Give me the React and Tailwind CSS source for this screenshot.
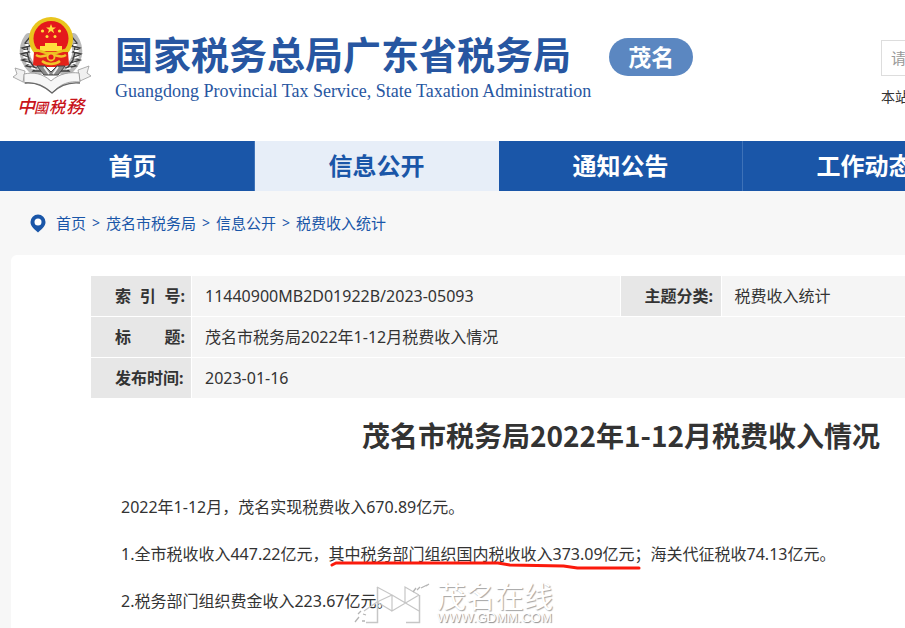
import clsx from "clsx";

const NAV = [
  { label: "首页" },
  { label: "信息公开", active: true },
  { label: "通知公告" },
  { label: "工作动态" },
];

const CRUMBS = ["首页", "茂名市税务局", "信息公开", "税费收入统计"];

// ─── Emblem ─────────────────────────────────────────────

function Emblem() {
  return (
    <svg width="82" height="106" viewBox="12 15 82 106" aria-hidden="true">
      {/* wheat, left and right */}
      <g fill="none" strokeLinecap="round">
        <path d="M30 38c-7 10-6 25 8 34M74 38c7 10 6 25-8 34" stroke="#b9b9b9" strokeWidth="10" />
        <path
          d="M31 37l-5 6 5 3-8 2 7 4-8 2 8 4-7 2 9 3-5 3 10 2-3 3 9 0M29 44l-1 8 2 8 5 7"
          stroke="#3c3c3c"
          strokeWidth="1.3"
        />
        <path
          d="M73 37l5 6-5 3 8 2-7 4 8 2-8 4 7 2-9 3 5 3-10 2 3 3-9 0M75 44l1 8-2 8-5 7"
          stroke="#3c3c3c"
          strokeWidth="1.3"
        />
        <path
          d="M27 45l2 0M25 51l3 0M25 57l3 1M28 63l3 1M33 68l3 1M77 45l-2 0M79 51l-3 0M79 57l-3 1M76 63l-3 1M71 68l-3 1"
          stroke="#fff"
          strokeWidth="1.8"
        />
      </g>

      {/* national emblem */}
      <circle cx="52" cy="39" r="22" fill="#e9c51e" />
      <path d="M35 52h34l1 13-8 2H42l-8-2z" fill="#e2231a" />
      <circle cx="52" cy="38.500" r="17.500" fill="#e4181c" />
      <path d="M52 24l1.300 3.500h3.700l-3 2.200 1.200 3.600-3.200-2.200-3.200 2.200 1.200-3.600-3-2.200h3.700z" fill="#ffdf3d" />
      <g fill="#ffdf3d">
        <circle cx="43.500" cy="31" r="1.600" />
        <circle cx="60.500" cy="31" r="1.600" />
        <circle cx="48" cy="36.500" r="1.500" />
        <circle cx="56" cy="36.500" r="1.500" />
        <path d="M46 43h12v3h5v5H41v-5h5z" />
      </g>
      <path d="M38 50l9 3h10l9-3" fill="none" stroke="#e9c51e" strokeWidth="2.500" />
      <path d="M37 55c6 4 9-1 15 0 6-1 9 4 15 0M43 61c5 4 13 4 18 0" fill="none" stroke="#f1c62a" strokeWidth="2.500" />
      <circle cx="52" cy="57" r="3.500" fill="#e4181c" stroke="#f1c62a" strokeWidth="1.800" />
      <path d="M38 66l8 0 6 6 6-6 8 0-7 9H45z" fill="#8a8a8a" stroke="#444" strokeWidth="1" />
      <path d="M45 67l5 7M59 67l-5 7" stroke="#f0f0f0" strokeWidth="1.800" />

      {/* ribbon */}
      <path d="M26 71l-10-3 2 6-4 3 10 5zM79 70l11-4-2 7 4 3-11 5z" fill="#f0f0f0" stroke="#999" strokeWidth="0.800" />
      <path
        d="M25 74c9-2 18-1 27 7 9-8 19-9 28-8l1 9c-10-1-19 1-28 11-9-9-18-11-28-10z"
        fill="#f6f6f6"
        stroke="#999"
        strokeWidth="0.900"
      />
      <path d="M26 83c10-1 18 2 27 10 9-9 18-11 28-10" fill="none" stroke="#666" strokeWidth="1.300" />
      <text y="113" fill="#c8141b" fontWeight="500" fontStyle="italic" fontFamily="'Noto Sans CJK SC', sans-serif">
        <tspan x="18" fontSize="18">中</tspan>
        <tspan x="35" fontSize="14">國</tspan>
        <tspan x="50" fontSize="16">税</tspan>
        <tspan x="67" fontSize="18">務</tspan>
      </text>
    </svg>
  );
}

function PinIcon() {
  return (
    <svg width="16" height="19" viewBox="0 0 16 19" aria-hidden="true">
      <path
        d="M8 0.500a7.500 7.500 0 0 0-7.500 7.500c0 4 3 6.500 7.500 10.500 4.500-4 7.500-6.500 7.500-10.500A7.500 7.500 0 0 0 8 0.500z"
        fill="#1a56a8"
      />
      <circle cx="8" cy="8" r="3.500" fill="#fff" />
    </svg>
  );
}

// ─── Header ─────────────────────────────────────────────

function Header() {
  return (
    <header className="mx-[11px] flex h-[141px] items-start justify-between">
      <div className="flex items-start pt-[15px]">
        <Emblem />
        <div className="ml-[22px] pt-[12px]">
          <h1 className="text-[38px] leading-[54px] font-bold text-[#2756a1]">
            国家税务总局广东省税务局
          </h1>
          <p className="font-['Liberation_Serif',serif] text-[18px] leading-[20px] text-[#2756a1]">
            Guangdong Provincial Tax Service, State Taxation Administration
          </p>
        </div>
        <span className="mt-[23px] ml-[18px] rounded-full bg-[#5b87c1] px-[19px] text-[23px] leading-[38px] font-bold text-white">
          茂名
        </span>
      </div>

      <div className="w-[350px] pt-[40px]">
        <input
          type="text"
          aria-label="搜索"
          placeholder="请输入"
          className="h-[36px] w-full border border-[#ddd] bg-white px-[9px] text-[15px] placeholder:text-[#999]"
        />
        <p className="mt-[11px] text-[14px] leading-[20px] text-[#333]">本站</p>
      </div>
    </header>
  );
}

function Nav() {
  return (
    <nav className="bg-[#1a56a8]">
      <ul className="mx-[11px] flex">
        {NAV.map((item) => (
          <li key={item.label} className="w-1/5">
            <a
              href="#"
              className={clsx(
                "block border-r text-center text-[24px] leading-[50px] font-bold",
                item.active
                  ? "border-[#e7eef8] bg-[#e7eef8] text-[#1a56a8]"
                  : "border-[#3e72b8] text-white"
              )}
            >
              {item.label}
            </a>
          </li>
        ))}
      </ul>
    </nav>
  );
}

function Breadcrumb() {
  return (
    <div className="flex h-[64px] items-center pl-[30px] text-[15px] text-[#1a56a8]">
      <PinIcon />
      <div className="ml-[10px] flex">
        {CRUMBS.map((crumb, i) => (
          <span key={crumb} className="flex">
            {i > 0 && <span className="w-[20px] text-center text-[14px]">&gt;</span>}
            <a href="#">{crumb}</a>
          </span>
        ))}
      </div>
    </div>
  );
}

// ─── Article ────────────────────────────────────────────

function Label({ children }) {
  return (
    <th scope="row" className="h-[40px] w-[100px] bg-[#e7e7e7] p-0 pr-[6px] pl-[24px] font-bold">
      <div className="flex justify-between">{children}</div>
    </th>
  );
}

function Value({ children, ...rest }) {
  return (
    <td className="bg-[#f5f5f5] p-0 pl-[13px]" {...rest}>
      {children}
    </td>
  );
}

function MetaTable() {
  return (
    <div className="mr-[81px] ml-[79px]">
      <table className="w-full table-fixed border-separate border-spacing-[1px] text-[16px] leading-[24px]">
        <colgroup>
          <col className="w-[100px]" />
          <col />
          <col className="w-[100px]" />
          <col />
        </colgroup>
        <tbody>
          <tr>
            <Label>
              <span>索</span>
              <span>引</span>
              <span>号:</span>
            </Label>
            <Value>11440900MB2D01922B/2023-05093</Value>
            <Label>
              <span>主题分类:</span>
            </Label>
            <Value>税费收入统计</Value>
          </tr>
          <tr>
            <Label>
              <span>标</span>
              <span>题:</span>
            </Label>
            <Value colSpan={3}>茂名市税务局2022年1-12月税费收入情况</Value>
          </tr>
          <tr>
            <Label>
              <span>发布时间:</span>
            </Label>
            <Value colSpan={3}>2023-01-16</Value>
          </tr>
        </tbody>
      </table>
    </div>
  );
}

// Hand-drawn red line below the marked words
function Marked({ children }) {
  return (
    <span className="relative inline-block">
      {children}
      <svg
        className="absolute top-[23px] left-0 w-full overflow-visible"
        height="10"
        viewBox="0 0 308 10"
        preserveAspectRatio="none"
        aria-hidden="true"
      >
        <path
          d="M3 4l4-2h163l12 2 54 1 14 2h62"
          fill="none"
          stroke="#fb1a0c"
          strokeWidth="3"
          strokeLinecap="round"
          strokeLinejoin="round"
        />
      </svg>
    </span>
  );
}

function Watermark() {
  return (
    <div className="absolute top-[583px] left-[354px] flex" aria-hidden="true">
      <svg width="76" height="44" viewBox="0 0 76 44" fill="none" stroke="#c6c6c6">
        <path d="M23.500 4v35.500H12M65.500 12v27.500H52" strokeWidth="1.500" />
        <path d="M23 4l15 8v16l27-16M38 12l27 16M38 28l-15-9M38 12l-15 7-13 9M51 20V4l14 8" strokeWidth="1.200" />
        <path
          d="M1 39l4-5M4 31l3-3M8 38h3M9 31l3 1M59 9l3-4M63 7l3-3M67 5l6-3M72 3l3-2"
          stroke="#b4b4b4"
          strokeWidth="1.300"
        />
      </svg>
      <div className="ml-[7px] text-white">
        <p className="text-[29px] leading-[28px] font-normal [text-shadow:1px_1px_1px_#a5a5a5]">
          茂名在线
        </p>
        <p className="font-['Liberation_Sans',sans-serif] text-[13px] leading-[14px] [text-shadow:1px_1px_1px_#888]">
          WWW.GDMM.COM
        </p>
      </div>
    </div>
  );
}

export default function App() {
  return (
    <div className="relative min-h-screen overflow-hidden bg-white font-['Noto_Sans','Noto_Sans_CJK_SC',sans-serif] text-[#333]">
      <div className="min-w-[1242px]">
        <Header />
        <Nav />
        <div className="bg-[#f7f7f7]">
          <Breadcrumb />
          <main className="mx-[11px] rounded-t-md bg-white pt-[20px] pb-[11px]">
            <MetaTable />
            <h2 className="mt-[16px] text-center font-['Noto_Sans_CJK_SC',sans-serif] text-[28px] leading-[40px] font-bold">
              茂名市税务局2022年1-12月税费收入情况
            </h2>
            <div className="mx-[80px] mt-[36px] space-y-[15px] pl-[30px] text-[16px] leading-[32px]">
              <p>2022年1-12月，茂名实现税费收入670.89亿元。</p>
              <p>
                1.全市税收收入447.22亿元，
                <Marked>其中税务部门组织国内税收收入373.09亿元</Marked>
                ；海关代征税收74.13亿元。
              </p>
              <p>2.税务部门组织费金收入223.67亿元。</p>
            </div>
          </main>
        </div>
      </div>
      <Watermark />
    </div>
  );
}
